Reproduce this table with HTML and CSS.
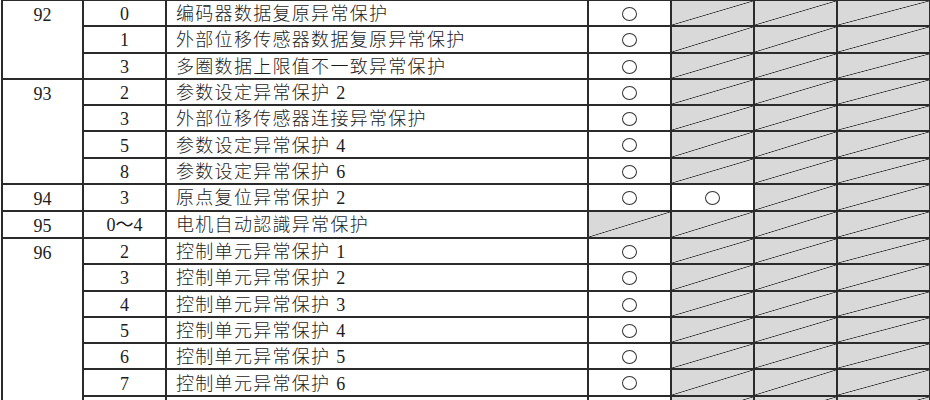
FILE: index.html
```html
<!DOCTYPE html>
<html lang="zh">
<head>
<meta charset="utf-8">
<title>异常保护一览</title>
<link rel="stylesheet" href="styles.css">
</head>
<body>
<div class="sheet">
<table class="alarms">
  <colgroup>
    <col class="c-main"><col class="c-sub"><col class="c-desc"><col class="c-a"><col class="c-b"><col class="c-c"><col class="c-d">
  </colgroup>
  <tbody>
    <tr><td class="main" rowspan="3">92</td><td class="sub">0</td><td class="desc">编码器数据复原异常保护</td><td class="ck"><span class="mark"></span></td><td class="x"></td><td class="x"></td><td class="x"></td></tr>
    <tr><td class="sub">1</td><td class="desc">外部位移传感器数据复原异常保护</td><td class="ck"><span class="mark"></span></td><td class="x"></td><td class="x"></td><td class="x"></td></tr>
    <tr><td class="sub">3</td><td class="desc">多圈数据上限值不一致异常保护</td><td class="ck"><span class="mark"></span></td><td class="x"></td><td class="x"></td><td class="x"></td></tr>
    <tr><td class="main" rowspan="4">93</td><td class="sub">2</td><td class="desc">参数设定异常保护 2</td><td class="ck"><span class="mark"></span></td><td class="x"></td><td class="x"></td><td class="x"></td></tr>
    <tr><td class="sub">3</td><td class="desc">外部位移传感器连接异常保护</td><td class="ck"><span class="mark"></span></td><td class="x"></td><td class="x"></td><td class="x"></td></tr>
    <tr><td class="sub">5</td><td class="desc">参数设定异常保护 4</td><td class="ck"><span class="mark"></span></td><td class="x"></td><td class="x"></td><td class="x"></td></tr>
    <tr><td class="sub">8</td><td class="desc">参数设定异常保护 6</td><td class="ck"><span class="mark"></span></td><td class="x"></td><td class="x"></td><td class="x"></td></tr>
    <tr><td class="main">94</td><td class="sub">3</td><td class="desc">原点复位异常保护 2</td><td class="ck"><span class="mark"></span></td><td class="ck"><span class="mark"></span></td><td class="x"></td><td class="x"></td></tr>
    <tr><td class="main">95</td><td class="sub">0～4</td><td class="desc">电机自动認識异常保护</td><td class="x"></td><td class="x"></td><td class="x"></td><td class="x"></td></tr>
    <tr><td class="main" rowspan="8">96</td><td class="sub">2</td><td class="desc">控制单元异常保护 1</td><td class="ck"><span class="mark"></span></td><td class="x"></td><td class="x"></td><td class="x"></td></tr>
    <tr><td class="sub">3</td><td class="desc">控制单元异常保护 2</td><td class="ck"><span class="mark"></span></td><td class="x"></td><td class="x"></td><td class="x"></td></tr>
    <tr><td class="sub">4</td><td class="desc">控制单元异常保护 3</td><td class="ck"><span class="mark"></span></td><td class="x"></td><td class="x"></td><td class="x"></td></tr>
    <tr><td class="sub">5</td><td class="desc">控制单元异常保护 4</td><td class="ck"><span class="mark"></span></td><td class="x"></td><td class="x"></td><td class="x"></td></tr>
    <tr><td class="sub">6</td><td class="desc">控制单元异常保护 5</td><td class="ck"><span class="mark"></span></td><td class="x"></td><td class="x"></td><td class="x"></td></tr>
    <tr><td class="sub">7</td><td class="desc">控制单元异常保护 6</td><td class="ck"><span class="mark"></span></td><td class="x"></td><td class="x"></td><td class="x"></td></tr>
    <tr><td class="sub">8</td><td class="desc">控制输入异常保护</td><td class="ck"><span class="mark"></span></td><td class="x"></td><td class="x"></td><td class="x"></td></tr>
  </tbody>
</table>
</div>
</body>
</html>
```
FILE: styles.css
```css
html, body {
  margin: 0;
  padding: 0;
  background: #ffffff;
}
body {
  width: 930px;
  height: 400px;
  overflow: hidden;
}
.sheet {
  padding-left: 1px;
  margin-top: -1px;
}
.alarms {
  border-collapse: collapse;
  table-layout: fixed;
  width: 928px;
  font-family: "Liberation Serif", "Noto Sans CJK SC", serif;
  font-size: 18px;
  color: #1c1c1c;
}
.c-main { width: 81px; }
.c-sub { width: 83px; }
.c-desc { width: 422px; }
.c-a { width: 83px; }
.c-b { width: 83px; }
.c-c { width: 83px; }
.c-d { width: 93px; }
.alarms tr {
  height: 26.29px;
}
.alarms td {
  border: 2px solid #2b2b2b;
  padding: 2px 0 0 0;
  line-height: 22px;
  white-space: nowrap;
  overflow: hidden;
}
.main {
  text-align: center;
  vertical-align: top;
  padding-top: 3px !important;
}
.sub {
  text-align: center;
}
.desc {
  padding-left: 9px !important;
  letter-spacing: 1.3px;
  font-weight: 300;
}
.ck {
  text-align: center;
  vertical-align: middle;
  padding-top: 0 !important;
}
.mark {
  display: inline-block;
  width: 13px;
  height: 12px;
  border: 1px solid #333;
  border-radius: 50%;
  vertical-align: middle;
  margin-top: -2px;
}
.x {
  background: linear-gradient(to bottom right,
    #d9d9d9 calc(50% - 0.7px),
    #262626 50%,
    #d9d9d9 calc(50% + 0.7px));
}
```
